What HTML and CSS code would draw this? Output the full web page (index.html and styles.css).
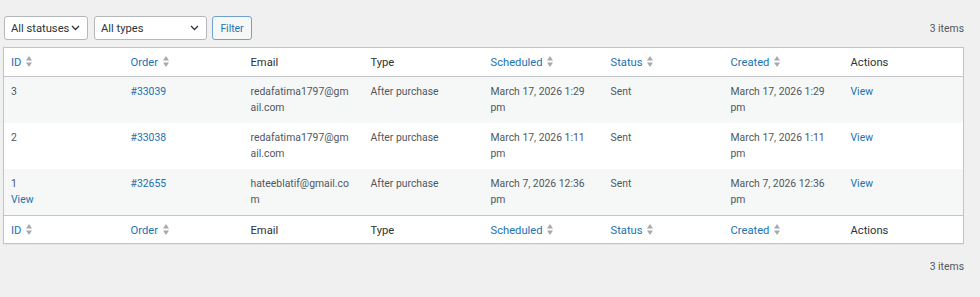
FILE: index.html
```html
<!DOCTYPE html>
<html lang="en">
<head>
  <meta charset="UTF-8">
  <title>Scheduled emails</title>
  <link rel="stylesheet" href="styles.css">
</head>
<body>
  <div class="wrap">
    <div class="tablenav top">
      <div class="filters">
        <div class="select status-select">
          <span>All statuses</span>
          <svg class="chev" width="9" height="6" viewBox="0 0 9 6"><path d="M1 1l3.5 3.5L8 1" fill="none" stroke="#2c3338" stroke-width="1.3"/></svg>
        </div>
        <div class="select type-select">
          <span>All types</span>
          <svg class="chev" width="9" height="6" viewBox="0 0 9 6"><path d="M1 1l3.5 3.5L8 1" fill="none" stroke="#2c3338" stroke-width="1.3"/></svg>
        </div>
        <button class="button">Filter</button>
      </div>
      <div class="count">3 items</div>
    </div>

    <table class="list">
      <thead>
        <tr>
          <th><a href="#">ID <svg class="sort" width="6" height="11" viewBox="0 0 6 11"><path d="M0 4.5L3 0L6 4.5zM0 6.5h6L3 11z"/></svg></a></th>
          <th><a href="#">Order <svg class="sort" width="6" height="11" viewBox="0 0 6 11"><path d="M0 4.5L3 0L6 4.5zM0 6.5h6L3 11z"/></svg></a></th>
          <th>Email</th>
          <th>Type</th>
          <th><a href="#">Scheduled <svg class="sort" width="6" height="11" viewBox="0 0 6 11"><path d="M0 4.5L3 0L6 4.5zM0 6.5h6L3 11z"/></svg></a></th>
          <th><a href="#">Status <svg class="sort" width="6" height="11" viewBox="0 0 6 11"><path d="M0 4.5L3 0L6 4.5zM0 6.5h6L3 11z"/></svg></a></th>
          <th><a href="#">Created <svg class="sort" width="6" height="11" viewBox="0 0 6 11"><path d="M0 4.5L3 0L6 4.5zM0 6.5h6L3 11z"/></svg></a></th>
          <th>Actions</th>
        </tr>
      </thead>
      <tbody>
        <tr>
          <td>3</td>
          <td><a href="#">#33039</a></td>
          <td class="email">redafatima1797@gmail.com</td>
          <td>After purchase</td>
          <td>March 17, 2026 1:29 pm</td>
          <td>Sent</td>
          <td>March 17, 2026 1:29 pm</td>
          <td><a href="#">View</a></td>
        </tr>
        <tr>
          <td>2</td>
          <td><a href="#">#33038</a></td>
          <td class="email">redafatima1797@gmail.com</td>
          <td>After purchase</td>
          <td>March 17, 2026 1:11 pm</td>
          <td>Sent</td>
          <td>March 17, 2026 1:11 pm</td>
          <td><a href="#">View</a></td>
        </tr>
        <tr>
          <td><span class="id">1</span><br><a href="#">View</a></td>
          <td><a href="#">#32655</a></td>
          <td class="email">hateeblatif@gmail.com</td>
          <td>After purchase</td>
          <td>March 7, 2026 12:36 pm</td>
          <td>Sent</td>
          <td>March 7, 2026 12:36 pm</td>
          <td><a href="#">View</a></td>
        </tr>
      </tbody>
      <tfoot>
        <tr>
          <th><a href="#">ID <svg class="sort" width="6" height="11" viewBox="0 0 6 11"><path d="M0 4.5L3 0L6 4.5zM0 6.5h6L3 11z"/></svg></a></th>
          <th><a href="#">Order <svg class="sort" width="6" height="11" viewBox="0 0 6 11"><path d="M0 4.5L3 0L6 4.5zM0 6.5h6L3 11z"/></svg></a></th>
          <th>Email</th>
          <th>Type</th>
          <th><a href="#">Scheduled <svg class="sort" width="6" height="11" viewBox="0 0 6 11"><path d="M0 4.5L3 0L6 4.5zM0 6.5h6L3 11z"/></svg></a></th>
          <th><a href="#">Status <svg class="sort" width="6" height="11" viewBox="0 0 6 11"><path d="M0 4.5L3 0L6 4.5zM0 6.5h6L3 11z"/></svg></a></th>
          <th><a href="#">Created <svg class="sort" width="6" height="11" viewBox="0 0 6 11"><path d="M0 4.5L3 0L6 4.5zM0 6.5h6L3 11z"/></svg></a></th>
          <th>Actions</th>
        </tr>
      </tfoot>
    </table>

    <div class="tablenav bottom">
      <div class="count">3 items</div>
    </div>
  </div>
</body>
</html>
```

FILE: styles.css
```css
body {
  margin: 0;
  background: #f0f0f1;
  font-family: Roboto, "Open Sans", sans-serif;
  font-size: 10.4px;
  color: #50575e;
}

a {
  color: #2271b1;
  text-decoration: none;
}

.wrap {
  padding: 16px 16px 0 3px;
}

.tablenav {
  display: flex;
  align-items: center;
  justify-content: space-between;
  height: 24px;
}

.tablenav.top {
  margin-bottom: 7px;
}

.tablenav.bottom {
  justify-content: flex-end;
  margin-top: 10px;
}

.filters {
  display: flex;
  gap: 6px;
  margin-left: 1px;
}

.select {
  display: flex;
  align-items: center;
  justify-content: space-between;
  box-sizing: border-box;
  height: 24px;
  padding: 0 7px 0 6px;
  background: #fff;
  border: 1px solid #b4b6ba;
  border-radius: 3px;
  font-size: 11.2px;
  color: #2c3338;
  white-space: nowrap;
}

.status-select {
  width: 84px;
}

.type-select {
  width: 113px;
}

.button {
  box-sizing: border-box;
  height: 24px;
  width: 40px;
  margin-left: -1px;
  padding: 0;
  background: #f6f7f7;
  border: 1px solid #72a1cf;
  border-radius: 3px;
  font-family: inherit;
  font-size: 10.4px;
  color: #2271b1;
}

.list {
  width: 100%;
  border-collapse: collapse;
  table-layout: fixed;
  background: #fff;
  border: 1px solid #c3c4c7;
  box-shadow: 0 1px 1px rgba(0, 0, 0, 0.04);
}

.list th,
.list td {
  text-align: left;
  vertical-align: top;
}

.list th {
  height: 28px;
  box-sizing: border-box;
  padding: 7px 10px 5px 7px;
  line-height: 15.5px;
  font-size: 11.2px;
  font-weight: normal;
  color: #2c3338;
}

.list td {
  height: 46px;
  box-sizing: border-box;
  padding: 7px 10px 6px 7px;
  line-height: 16.5px;
}

.list thead th {
  border-bottom: 1px solid #c3c4c7;
}

.list tfoot th {
  border-top: 1px solid #c3c4c7;
}

.list tbody tr:nth-child(odd) {
  background: #f6f7f7;
}

.id {
  color: #50575e;
}

.email {
  word-break: break-all;
}

.sort {
  margin-left: 2px;
  vertical-align: -1px;
  fill: #a7aaad;
}
```
